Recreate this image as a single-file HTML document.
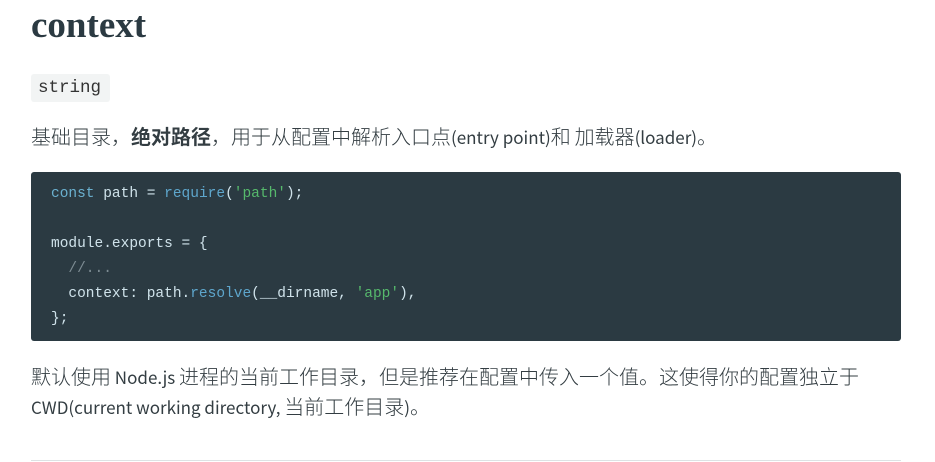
<!DOCTYPE html>
<html><head><meta charset="utf-8"><style>
body{margin:0;background:#fff;width:935px;height:462px;overflow:hidden;font-family:"Noto Sans CJK SC","Liberation Sans",sans-serif;color:#2b3a42}
h1{position:absolute;left:31px;top:3px;margin:0;font-family:"Liberation Serif","Noto Serif CJK SC",serif;font-weight:bold;font-size:37px;line-height:46px;color:#2b3a42}
.tag{position:absolute;left:31px;top:74px;width:79px;height:28px;background:#f2f4f4;border-radius:3px;font-family:"Liberation Mono",monospace;font-size:17.5px;line-height:29px;text-indent:7px;color:#333}
p{position:absolute;left:31px;margin:0;font-size:17px;line-height:30px;color:#333d42;white-space:nowrap}
p i{font-style:normal;font-size:20px;font-weight:300;line-height:20px}
p b i{font-weight:bold}
pre{position:absolute;left:31px;top:172px;width:870px;height:169px;margin:0;background:#2b3a42;border-radius:3px;box-sizing:border-box;padding:10px 20px;font-family:"Liberation Mono",monospace;font-size:14.5px;line-height:25px;color:#cfe2ea}
.k{color:#6bb1d0}.f{color:#5ea6cc}.s{color:#56b96c}.c{color:#7d8c93}
.hr{position:absolute;left:31px;top:460px;width:870px;height:1px;background:#dde2e4}
</style></head><body>
<h1>context</h1>
<div class="tag">string</div>
<p style="top:122px"><i>基础目录，</i><b><i>绝对路径</i></b><i>，用于从配置中解析入口点</i>(entry point)<i>和</i> <i>加载器</i>(loader)<i>。</i></p>
<pre><span class="k">const</span> path = <span class="f">require</span>(<span class="s">'path'</span>);

module.exports = {
  <span class="c">//...</span>
  context: path.<span class="f">resolve</span>(__dirname, <span class="s">'app'</span>),
};</pre>
<p style="top:362px"><i>默认使用</i> Node.js <i>进程的当前工作目录，但是推荐在配置中传入一个值。这使得你的配置独立于</i><br>CWD(current working directory, <i>当前工作目录</i>)<i>。</i></p>
<div class="hr"></div>
</body></html>
